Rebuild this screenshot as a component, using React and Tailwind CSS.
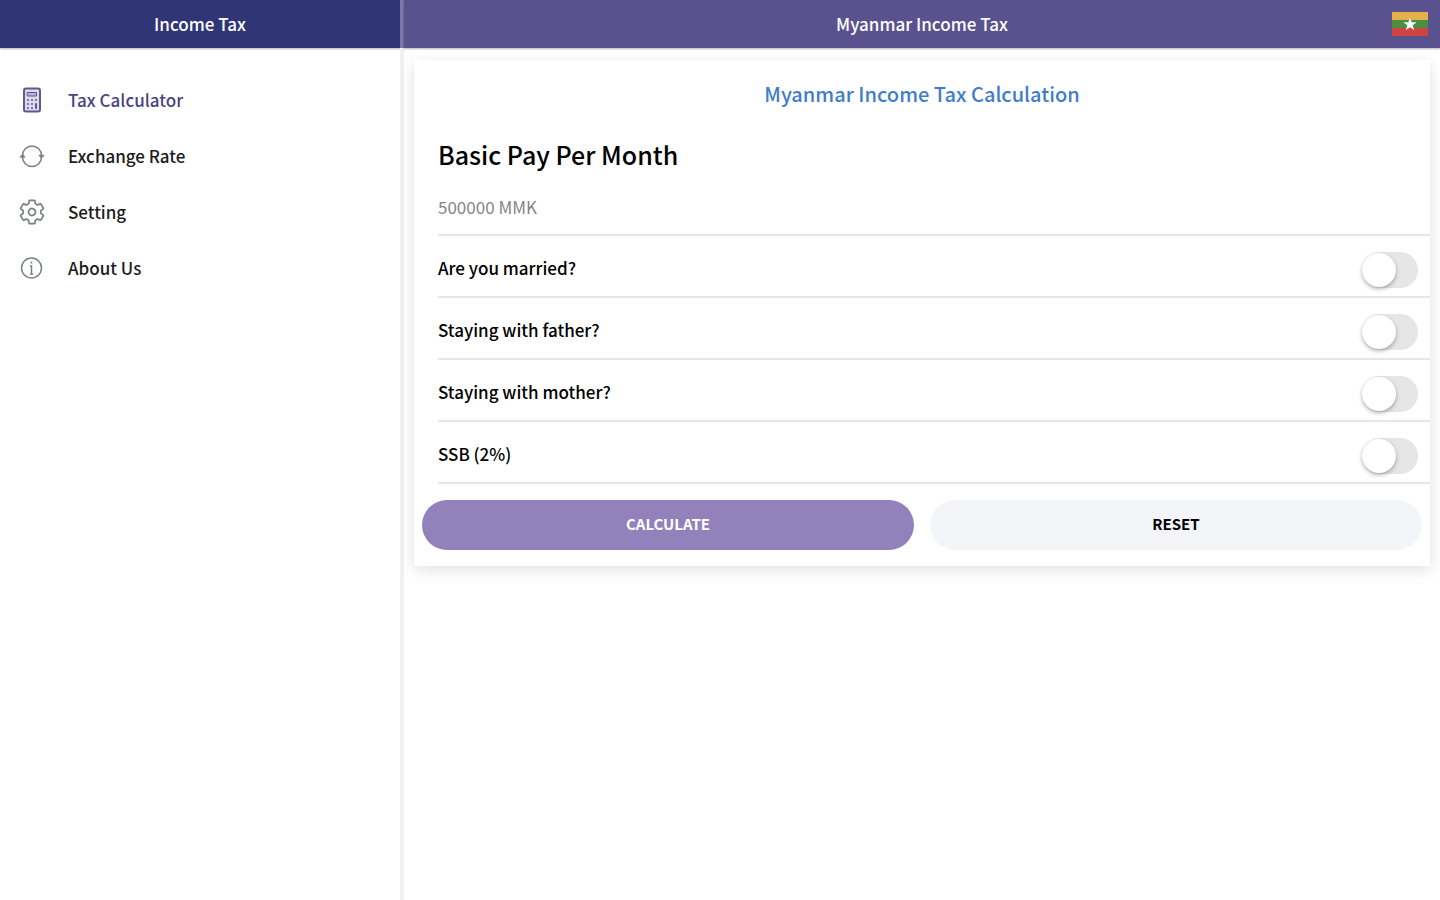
import React, { useState } from 'react';
import { IoSettingsOutline } from 'react-icons/io5';

const CalculatorIcon = ({ className }) => (
    <svg viewBox="0 0 28 28" className={className} fill="none" stroke="currentColor" strokeLinecap="round" aria-hidden="true">
        <rect x="6" y="2.5" width="16" height="23" rx="2" strokeWidth="2" fill="#dddbe9" />
        <path d="M9.5 6.5h9v3.5h-9z" strokeWidth="1" fill="#b9b5d0" />
        <path d="M10 14h.01M14 14h.01M18 14h.01M10 18h.01M14 18h.01M18 18h.01M10 22h.01M14 22h.01M18 22v-4" strokeWidth="2" />
    </svg>
);

const ExchangeIcon = ({ className }) => (
    <svg viewBox="0 0 28 28" className={className} fill="none" stroke="currentColor" strokeWidth="1.5" strokeLinecap="round" strokeLinejoin="round" aria-hidden="true">
        <path d="M4.5 13.5a9.5 9.5 0 0 1 19 0" />
        <path d="M23.5 15a9.5 9.5 0 0 1-19 0" />
        <path d="M21.5 13.5l2 2 2-2z" fill="currentColor" />
        <path d="M2.5 15l2-2 2 2z" fill="currentColor" />
    </svg>
);

const InfoIcon = ({ className }) => (
    <svg viewBox="0 0 28 28" className={className} fill="none" stroke="currentColor" strokeWidth="1.5" aria-hidden="true">
        <circle cx="13.5" cy="14" r="10" />
        <path d="M13.5 7.5v2M12 12h1.5v8M12 20h3" />
    </svg>
);

const menuItems = [
    { id: 'calculator', label: 'Tax Calculator', icon: CalculatorIcon },
    { id: 'exchange', label: 'Exchange Rate', icon: ExchangeIcon },
    { id: 'setting', label: 'Setting', icon: IoSettingsOutline },
    { id: 'about', label: 'About Us', icon: InfoIcon },
];

const questions = [
    { id: 'married', label: 'Are you married?' },
    { id: 'father', label: 'Staying with father?' },
    { id: 'mother', label: 'Staying with mother?' },
    { id: 'ssb', label: 'SSB (2%)' },
];

const MyanmarFlag = () => (
    <svg viewBox="0 0 36 24" className="w-9 h-6" role="img" aria-label="Myanmar">
        <rect width="36" height="8" fill="#e5b04a" />
        <rect y="8" width="36" height="8" fill="#4b8f3e" />
        <rect y="16" width="36" height="8" fill="#cf4440" />
        <path d="M18 5.5l1.7 4.8h5l-4 3 1.5 4.9-4.2-3-4.2 3 1.5-4.9-4-3h5z" fill="#f4f8fb" />
    </svg>
);

const Sidebar = () => (
    <aside className="w-[404px] shrink-0 flex flex-col">
        <header className="h-12 flex items-center justify-center bg-[#2f3575] border-r-4 border-[#7c78a9] text-white text-[17px]/6 font-medium shadow-[0_1px_2px_rgba(0,0,0,0.3)]">
            <h1>Income Tax</h1>
        </header>
        <nav className="grow border-r-4 border-[#f1f1f1] pt-6">
            <ul>
                {menuItems.map(({ id, label, icon: Icon }) => (
                    <li key={id}>
                        <a
                            href={`#${id}`}
                            className={`h-14 flex items-center gap-[22px] px-[18px] text-[17px]/6 font-medium ${id === 'calculator' ? 'text-[#4a447f]' : 'text-[#1c1c1c]'}`}
                        >
                            <Icon className={`size-7 ${id === 'calculator' ? 'text-[#5f5991]' : 'text-[#7b8282]'}`} />
                            {label}
                        </a>
                    </li>
                ))}
            </ul>
        </nav>
    </aside>
);

const Toggle = ({ id, checked, onChange }) => (
    <input
        id={id}
        type="checkbox"
        checked={checked}
        onChange={onChange}
        className="appearance-none w-14 h-9 shrink-0 rounded-full bg-[#e6e6e6] checked:bg-[#9381bb] flex items-center before:size-[34px] before:rounded-full before:bg-white before:shadow-[0_2px_4px_rgba(0,0,0,0.3)] checked:before:ml-5"
    />
);

export default function App() {
    const [pay, setPay] = useState('');
    const [answers, setAnswers] = useState({});

    const handleReset = () => {
        setPay('');
        setAnswers({});
    };

    return (
        <div className="min-h-screen flex bg-white text-black font-['Noto_Sans_CJK_SC',sans-serif]">
            <Sidebar />
            <div className="grow flex flex-col">
                <header className="h-12 flex items-center bg-[#5a528f] pr-3 text-white text-[17px]/6 font-medium shadow-[0_1px_2px_rgba(0,0,0,0.3)]">
                    <h2 className="grow pl-12 text-center">Myanmar Income Tax</h2>
                    <MyanmarFlag />
                </header>
                <main className="px-[10px] pt-3">
                    <form className="bg-white pt-5 pb-4 shadow-[0_4px_14px_rgba(0,0,0,0.12)]" onSubmit={e => e.preventDefault()}>
                        <h3 className="text-center text-xl/7 font-medium text-[#3f7dcb]">Myanmar Income Tax Calculation</h3>
                        <div className="pl-6">
                            <div className="pt-[30px] border-b-2 border-[#e6e6e6]">
                                <label htmlFor="pay" className="block text-[25px]/8 font-medium">Basic Pay Per Month</label>
                                <input
                                    id="pay"
                                    value={pay}
                                    onChange={e => setPay(e.target.value)}
                                    placeholder="500000 MMK"
                                    className="block w-full h-16 pt-2 text-[17px]/6 outline-none placeholder:text-[#858585]"
                                />
                            </div>
                            {questions.map(q => (
                                <div key={q.id} className="h-[62px] flex items-center justify-between pr-3 pt-2 border-b-2 border-[#e6e6e6]">
                                    <label htmlFor={q.id} className="pb-1 text-[17px]/6 font-medium">{q.label}</label>
                                    <Toggle
                                        id={q.id}
                                        checked={!!answers[q.id]}
                                        onChange={e => setAnswers({ ...answers, [q.id]: e.target.checked })}
                                    />
                                </div>
                            ))}
                        </div>
                        <div className="grid grid-cols-2 gap-4 px-2 pt-4 text-[15px]/6 font-bold">
                            <button type="submit" className="h-[50px] pb-0.5 rounded-full bg-[#9381bb] text-white">CALCULATE</button>
                            <button type="button" onClick={handleReset} className="h-[50px] pb-0.5 rounded-full bg-[#f3f5f9]">RESET</button>
                        </div>
                    </form>
                </main>
            </div>
        </div>
    );
}
